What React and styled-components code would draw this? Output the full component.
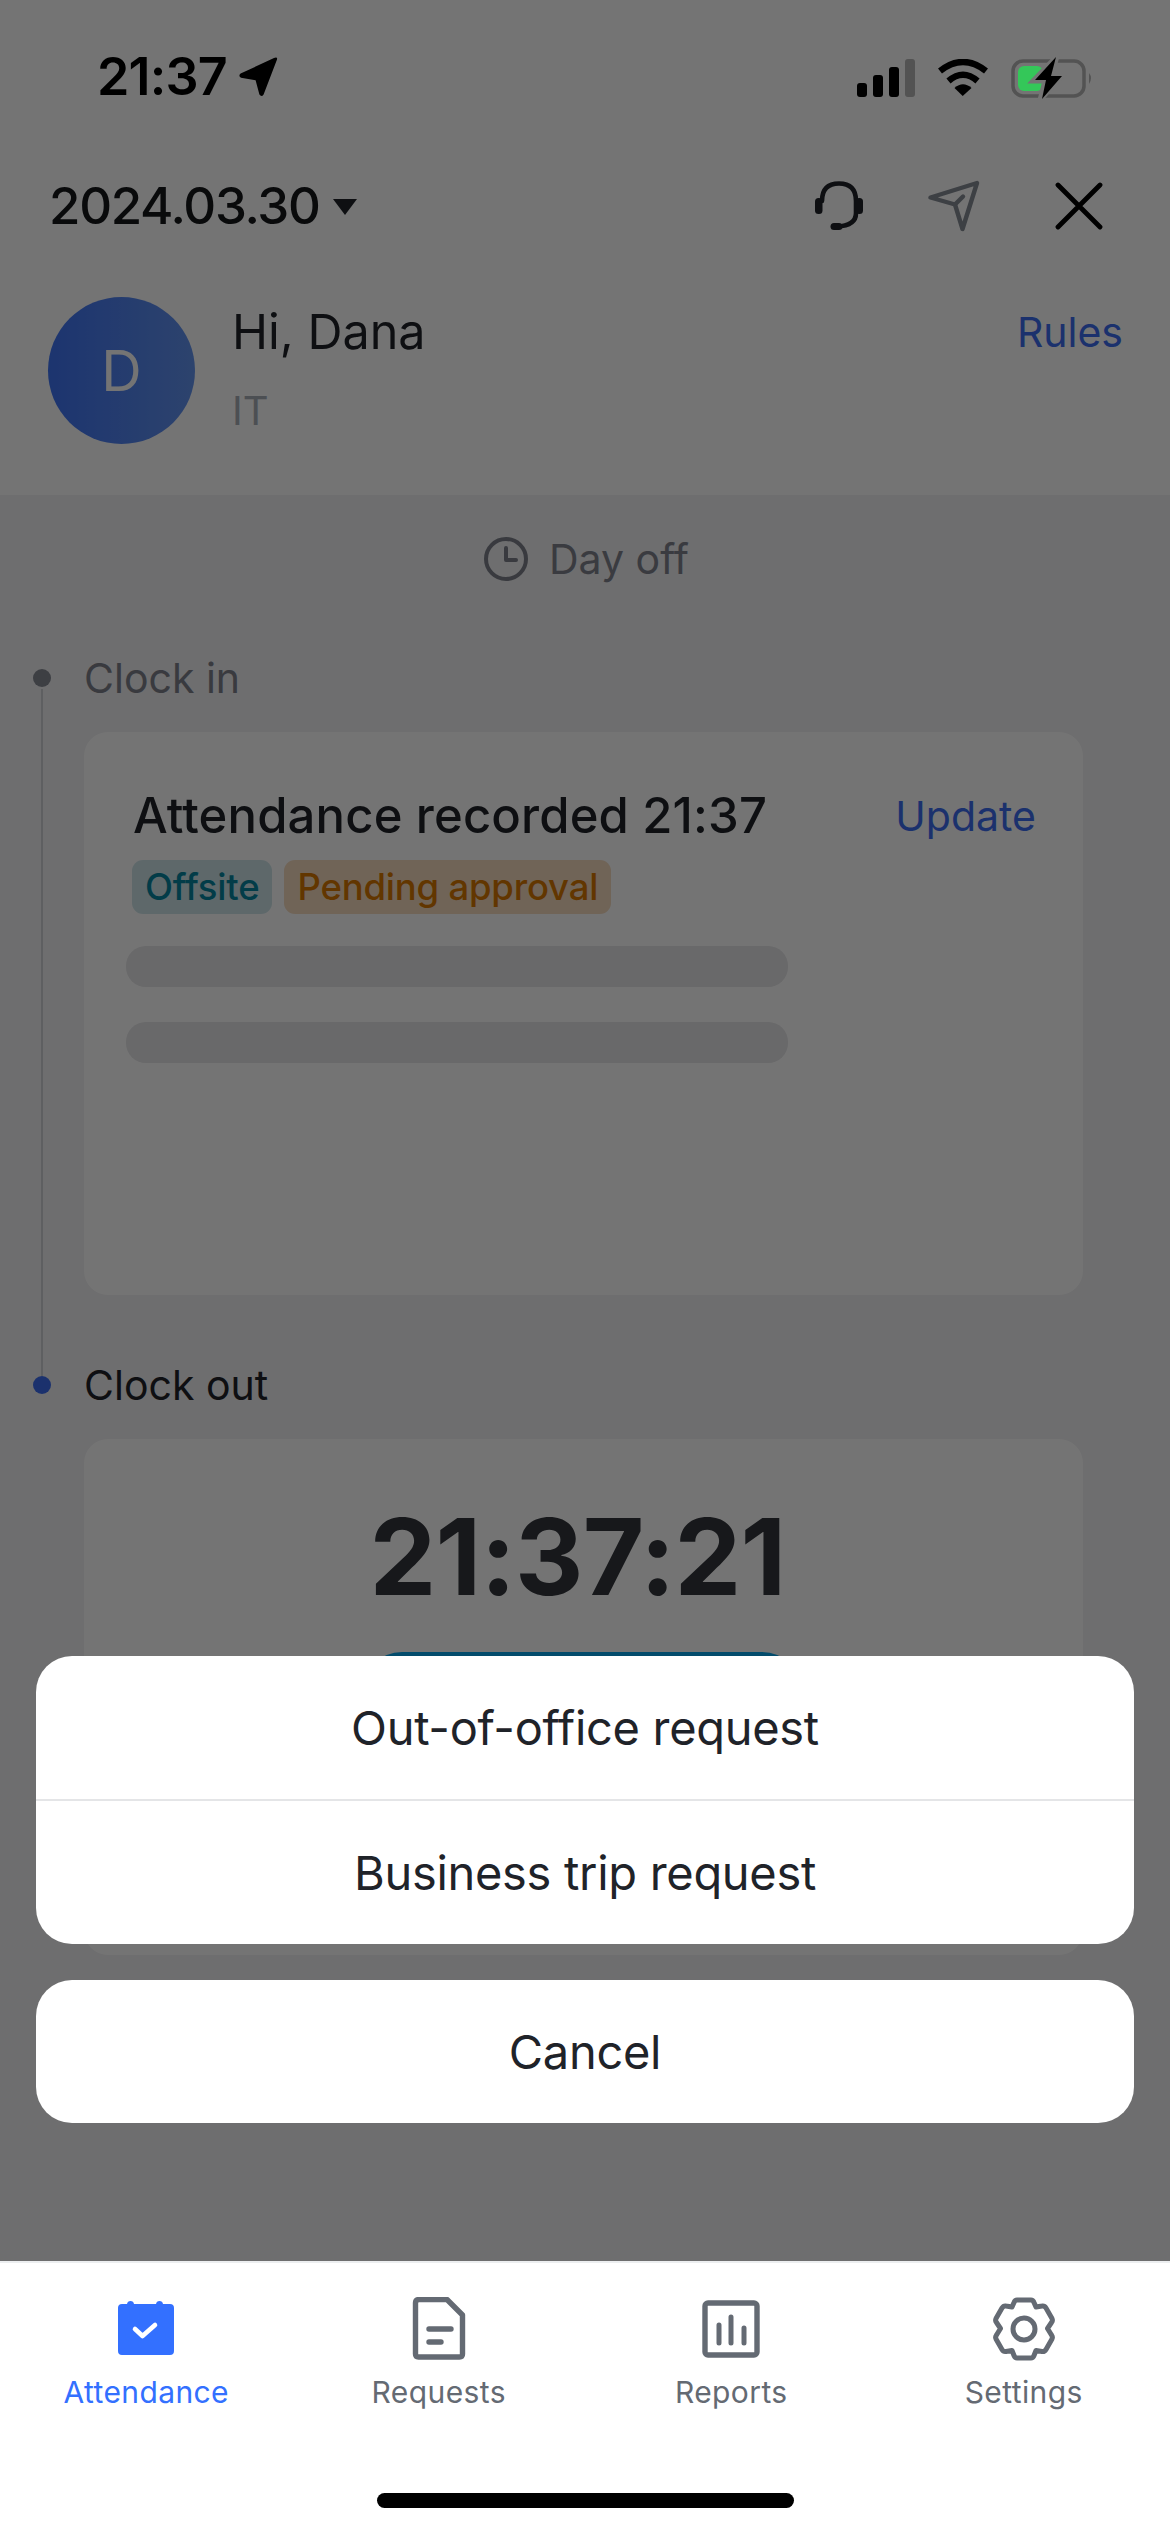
import styled, { createGlobalStyle } from "styled-components";

const GlobalStyle = createGlobalStyle`
  html, body {
    margin: 0;
    padding: 0;
    background: #fff;
  }
  * {
    box-sizing: border-box;
  }
`;

const Page = styled.div`
  position: relative;
  width: 1170px;
  height: 2532px;
  display: flex;
  flex-direction: column;
  overflow: hidden;
  font-family: Inter, "Liberation Sans", sans-serif;
  color: #1f2329;
`;

const Scrim = styled.div`
  position: absolute;
  inset: 0;
  z-index: 1;
  background: rgba(0, 0, 0, 0.545);
`;

const StatusBar = styled.div`
  position: relative;
  z-index: 2;
  height: 150px;
  padding: 47px 0 0 97px;
  display: flex;
  justify-content: space-between;
  align-items: flex-start;
  color: #000;
`;

const StatusLeft = styled.div`
  display: flex;
  align-items: center;
  gap: 11px;
  height: 60px;
`;

const StatusTime = styled.span`
  font-size: 52px;
  line-height: 60px;
  font-weight: 600;
  letter-spacing: -0.8px;
`;

const StatusRight = styled.div`
  display: flex;
  align-items: center;
  height: 46px;
  margin: 8px 77px 0 0;
  gap: 22px;
`;

const Header = styled.header`
  height: 345px;
  background: #fff;
  display: flex;
  flex-direction: column;
  padding: 21px 47px 0 48px;
`;

const NavRow = styled.div`
  display: flex;
  align-items: center;
  justify-content: space-between;
  height: 70px;
`;

const DateButton = styled.div`
  display: flex;
  align-items: center;
  gap: 13px;
  font-size: 51px;
  line-height: 70px;
  font-weight: 500;
  letter-spacing: -1.3px;
  color: #14161a;
  padding-left: 1px;
`;

const Caret = styled.span`
  width: 0;
  height: 0;
  margin-top: 2px;
  border-left: 12px solid transparent;
  border-right: 12px solid transparent;
  border-top: 16px solid #1f2329;
`;

const NavIcons = styled.div`
  display: flex;
  align-items: center;
  gap: 65px;
  margin: -1px 20px 0 0;
`;

const Profile = styled.div`
  display: flex;
  align-items: flex-start;
  margin-top: 56px;
`;

const Avatar = styled.div`
  flex: none;
  width: 147px;
  height: 147px;
  border-radius: 50%;
  background: linear-gradient(90deg, #3f74f5, #6394f0);
  color: #fff;
  display: flex;
  align-items: center;
  justify-content: center;
  font-size: 56px;
`;

const ProfileText = styled.div`
  flex: 1;
  margin-left: 37px;
`;

const Greeting = styled.div`
  font-size: 48.5px;
  line-height: 60px;
  margin-top: 5px;
  color: #1f2329;
`;

const Department = styled.div`
  font-size: 40px;
  line-height: 50px;
  margin-top: 24px;
  color: #a8adb6;
`;

const TextLink = styled.span`
  color: #3d6df0;
  font-size: ${({ $size }) => $size}px;
  line-height: 50px;
`;

const RulesLink = styled(TextLink)`
  margin-top: 10px;
`;

const Main = styled.main`
  flex: 1;
  background: #f1f1f3;
  padding-top: 29px;
`;

const DayStatus = styled.div`
  display: flex;
  align-items: center;
  justify-content: center;
  gap: 21px;
  height: 70px;
  font-size: 41px;
  color: #7f838d;
  padding-left: 3px;
`;

const Timeline = styled.div`
  margin-top: 63px;
  padding: 0 87px 0 33px;
`;

const Step = styled.section`
  position: relative;
  padding-left: 51px;
  height: ${({ $height }) => $height}px;
`;

const Rail = styled.span`
  position: absolute;
  left: 8px;
  top: 32px;
  width: 2px;
  height: 687px;
  background: #cfd2d6;
`;

const Dot = styled.span`
  position: absolute;
  left: 0;
  top: 12px;
  width: 18px;
  height: 18px;
  border-radius: 50%;
  background: ${({ $active }) => ($active ? "#3d6df0" : "#868a94")};
`;

const StepLabel = styled.div`
  height: 42px;
  font-size: 41px;
  line-height: 42px;
  color: ${({ $active }) => ($active ? "#1f2329" : "#7d818b")};
`;

const Card = styled.div`
  margin-top: 33px;
  background: #fff;
  border-radius: 24px;
  width: 999px;
  height: ${({ $height }) => $height}px;
`;

const RecordCard = styled(Card)`
  padding: 59px 47px 0 42px;
`;

const RecordHead = styled.div`
  display: flex;
  justify-content: space-between;
  align-items: center;
  padding-left: 7px;
  height: 50px;
`;

const RecordTitle = styled.div`
  font-size: 49px;
  line-height: 50px;
  font-weight: 500;
  color: #1f2329;
  letter-spacing: 0.15px;
`;

const TagRow = styled.div`
  display: flex;
  gap: 12px;
  margin: 19px 0 0 6px;
`;

const Tag = styled.span`
  height: 54px;
  padding: 0 13px;
  border-radius: 11px;
  display: flex;
  align-items: center;
  font-size: 36.5px;
  font-weight: 500;
  letter-spacing: -0.2px;
  background: ${({ $tone }) => ($tone === "teal" ? "#cfe5ea" : "#f6dcc0")};
  color: ${({ $tone }) => ($tone === "teal" ? "#06849f" : "#d87800")};
`;

const Skeleton = styled.div`
  width: 662px;
  height: 41px;
  margin-top: ${({ $gap }) => $gap}px;
  border-radius: 20px;
  background: #e6e6e8;
`;

const ClockCard = styled(Card)`
  display: flex;
  flex-direction: column;
  align-items: center;
  padding-top: 62px;
`;

const ClockTime = styled.div`
  font-size: 106px;
  line-height: 112px;
  font-weight: 700;
  letter-spacing: -0.8px;
  margin-right: 12px;
  color: #33363c;
`;

const ClockButton = styled.div`
  margin: 39px 3px 0 0;
  width: 440px;
  height: 240px;
  border-radius: 40px;
  background: #08a8ee;
`;

const SheetArea = styled.div`
  position: absolute;
  left: 36px;
  right: 36px;
  top: 1656px;
  z-index: 2;
  display: flex;
  flex-direction: column;
  gap: 36px;
`;

const SheetGroup = styled.div`
  background: #fff;
  border-radius: 36px;
  overflow: hidden;
`;

const SheetRow = styled.div`
  height: ${({ $height }) => $height}px;
  display: flex;
  align-items: center;
  justify-content: center;
  font-size: 47px;
  letter-spacing: -0.3px;
  color: #1f2329;
  border-top: ${({ $divided }) => ($divided ? "2px solid #e4e5e7" : "none")};
`;

const TabBar = styled.nav`
  position: relative;
  z-index: 2;
  flex: none;
  height: 271px;
  background: #fff;
  border-top: 2px solid #eceef0;
`;

const Tabs = styled.div`
  display: grid;
  grid-template-columns: repeat(4, 292.5px);
  padding: 34px 0 0 0;
`;

const Tab = styled.div`
  display: flex;
  flex-direction: column;
  align-items: center;
  color: ${({ $active }) => ($active ? "#3370ff" : "#646a73")};
`;

const TabIcon = styled.svg`
  width: 64px;
  height: 64px;
  display: block;
`;

const TabLabel = styled.span`
  margin-top: 12px;
  font-size: 30px;
  line-height: 38px;
  letter-spacing: 0.4px;
`;

const HomeIndicator = styled.div`
  position: absolute;
  left: 377px;
  bottom: 24px;
  width: 417px;
  height: 15px;
  border-radius: 8px;
  background: #000;
`;

const CloseSvg = styled.svg`
  margin-left: 10px;
`;

const LocationArrow = () => (
  <svg width="42" height="42" viewBox="0 0 42 42" fill="#000">
    <path d="M39 3.6 L25.6 38.4 Q23.6 41.6 21.4 38.6 L17.6 24.2 L3 21.8 Q0 20 2.6 17.6 L36 2 Q39.8 .6 39 3.6 Z" />
  </svg>
);

const SignalBars = () => (
  <svg width="58" height="38" viewBox="0 0 58 38">
    <rect x="0" y="24" width="10" height="14" rx="3" fill="#000" />
    <rect x="16" y="16" width="10" height="22" rx="3" fill="#000" />
    <rect x="32" y="8" width="10" height="30" rx="3" fill="#000" />
    <rect x="48" y="0" width="10" height="38" rx="3" fill="#535353" />
  </svg>
);

const WifiIcon = () => (
  <svg width="52" height="38" viewBox="0 0 52 38" fill="none" stroke="#000" strokeWidth="6.4">
    <path d="M3 12 Q26 -6 49 12" />
    <path d="M11.5 22 Q26 9.5 40.5 22" />
    <path d="M25.7 37 L17.5 29 Q26 21.5 34.5 29 Z" fill="#000" stroke="none" />
  </svg>
);

const BatteryIcon = () => (
  <svg width="82" height="44" viewBox="0 0 82 44">
    <rect x="2" y="5" width="71" height="35" rx="10" fill="none" stroke="#535353" strokeWidth="3.5" />
    <path d="M78 17 Q82 22 78 28 Z" fill="#535353" />
    <rect x="7" y="10" width="25" height="25" rx="6" fill="#34c759" />
    <path d="M46 0 L22 25 L34 25 L29 44 L52 19 L41 19 Z" fill="#747474" stroke="#747474" strokeWidth="5" />
    <path d="M45 1 L24 24 L35 24 L31 43 L51 20 L40 20 Z" fill="#000" />
  </svg>
);

const HeadsetIcon = () => (
  <svg width="48" height="50" viewBox="0 0 48 50" fill="none" stroke="#1f2329" strokeWidth="4.6" strokeLinecap="round">
    <path d="M7 20 C7 8 13 2.5 24 2.5 C35 2.5 41 8 41 20 V32 C41 40 35 45 22 45.5" />
    <rect x="0" y="17" width="7.5" height="16" rx="3.5" fill="#1f2329" stroke="none" />
    <rect x="40.5" y="17" width="7.5" height="16" rx="3.5" fill="#1f2329" stroke="none" />
    <path d="M19 45.5 H24" strokeWidth="7" />
  </svg>
);

const SendIcon = () => (
  <svg width="52" height="52" viewBox="0 0 52 52" fill="none" stroke="#878d96" strokeWidth="4.4" strokeLinejoin="round" strokeLinecap="round">
    <path d="M49 3 L34.5 49 L27 24.5 L2.5 17.5 Z" />
    <path d="M27 24.5 L35 16.5" />
  </svg>
);

const CloseIcon = () => (
  <CloseSvg width="48" height="48" viewBox="0 0 48 48" stroke="#000" strokeWidth="4.8" strokeLinecap="round">
    <path d="M3 3 L45 45 M45 3 L3 45" />
  </CloseSvg>
);

const ClockIcon = () => (
  <svg width="44" height="44" viewBox="0 0 44 44" fill="none" stroke="#7d818b" strokeWidth="4">
    <circle cx="22" cy="22" r="20" />
    <path d="M22 11 V23 H32" strokeLinecap="round" strokeLinejoin="round" />
  </svg>
);

const AttendanceIcon = () => (
  <TabIcon viewBox="0 0 64 64">
    <path
      fill="#3370ff"
      d="M8 7 H13 Q13.5 4 16.5 4 Q19.5 4 20 7 H42 Q42.5 4 45.5 4 Q48.5 4 49 7 H56 Q60 7 60 11 H60 V54 Q60 58 56 58 H8 Q4 58 4 54 V11 Q4 7 8 7 Z"
    />
    <path d="M21 32 L28.5 39 L41 28" fill="none" stroke="#fff" strokeWidth="4.6" strokeLinecap="round" strokeLinejoin="round" />
  </TabIcon>
);

const RequestsIcon = () => (
  <TabIcon viewBox="0 0 64 64" fill="none" stroke="currentColor" strokeWidth="5.4" strokeLinecap="round" strokeLinejoin="round">
    <path d="M12 2.5 H40 L55.5 18 V57 Q55.5 60 52.5 60 H11.5 Q8.5 60 8.5 57 V6 Q8.5 2.5 12 2.5 Z" />
    <path d="M22 32 H44 M22 45 H34" />
  </TabIcon>
);

const ReportsIcon = () => (
  <TabIcon viewBox="0 0 64 64" fill="none" stroke="currentColor" strokeLinecap="round">
    <rect x="6" y="6" width="52" height="52" rx="3" strokeWidth="5.4" />
    <path d="M20 28 V46 M32 20 V46 M45 31 V46" strokeWidth="5" />
  </TabIcon>
);

const SettingsIcon = () => (
  <TabIcon viewBox="0 0 64 64" fill="none" stroke="currentColor" strokeWidth="5" strokeLinejoin="round">
    <path d="M25 3 H39 Q41 3 42 5.5 L44 10 L50 9 Q52.5 8.5 54 11 L60 21.5 Q61 23.5 59.5 25.5 L55.5 31.5 L59.5 38 Q61 40 60 42 L54 52.5 Q52.5 55 50 54.5 L44 53.5 L42 58.5 Q41 61 39 61 H25 Q23 61 22 58.5 L20 53.5 L14 54.5 Q11.5 55 10 52.5 L4 42 Q3 40 4.5 38 L8.5 31.5 L4.5 25.5 Q3 23.5 4 21.5 L10 11 Q11.5 8.5 14 9 L20 10 L22 5.5 Q23 3 25 3 Z" />
    <circle cx="32" cy="32" r="11" />
  </TabIcon>
);

const tabs = [
  { label: "Attendance", icon: AttendanceIcon, active: true },
  { label: "Requests", icon: RequestsIcon },
  { label: "Reports", icon: ReportsIcon },
  { label: "Settings", icon: SettingsIcon },
];

const App = () => {
  return (
    <Page>
      <GlobalStyle />
      <Scrim />
      <StatusBar>
        <StatusLeft>
          <StatusTime>21:37</StatusTime>
          <LocationArrow />
        </StatusLeft>
        <StatusRight>
          <SignalBars />
          <WifiIcon />
          <BatteryIcon />
        </StatusRight>
      </StatusBar>
      <Header>
        <NavRow>
          <DateButton>
            2024.03.30
            <Caret />
          </DateButton>
          <NavIcons>
            <HeadsetIcon />
            <SendIcon />
            <CloseIcon />
          </NavIcons>
        </NavRow>
        <Profile>
          <Avatar>D</Avatar>
          <ProfileText>
            <Greeting>Hi, Dana</Greeting>
            <Department>IT</Department>
          </ProfileText>
          <RulesLink $size={41}>Rules</RulesLink>
        </Profile>
      </Header>
      <Main>
        <DayStatus>
          <ClockIcon />
          Day off
        </DayStatus>
        <Timeline>
          <Step $height={707}>
            <Rail />
            <Dot />
            <StepLabel>Clock in</StepLabel>
            <RecordCard $height={563}>
              <RecordHead>
                <RecordTitle>Attendance recorded 21:37</RecordTitle>
                <TextLink $size={41}>Update</TextLink>
              </RecordHead>
              <TagRow>
                <Tag $tone="teal">Offsite</Tag>
                <Tag $tone="orange">Pending approval</Tag>
              </TagRow>
              <Skeleton $gap={32} />
              <Skeleton $gap={35} />
            </RecordCard>
          </Step>
          <Step>
            <Dot $active />
            <StepLabel $active>Clock out</StepLabel>
            <ClockCard $height={516}>
              <ClockTime>21:37:21</ClockTime>
              <ClockButton />
            </ClockCard>
          </Step>
        </Timeline>
      </Main>
      <SheetArea>
        <SheetGroup>
          <SheetRow $height={143}>Out-of-office request</SheetRow>
          <SheetRow $height={145} $divided>
            Business trip request
          </SheetRow>
        </SheetGroup>
        <SheetGroup>
          <SheetRow $height={143}>Cancel</SheetRow>
        </SheetGroup>
      </SheetArea>
      <TabBar>
        <Tabs>
          {tabs.map(({ label, icon: Icon, active }) => (
            <Tab key={label} $active={active}>
              <Icon />
              <TabLabel>{label}</TabLabel>
            </Tab>
          ))}
        </Tabs>
        <HomeIndicator />
      </TabBar>
    </Page>
  );
};

export default App;
